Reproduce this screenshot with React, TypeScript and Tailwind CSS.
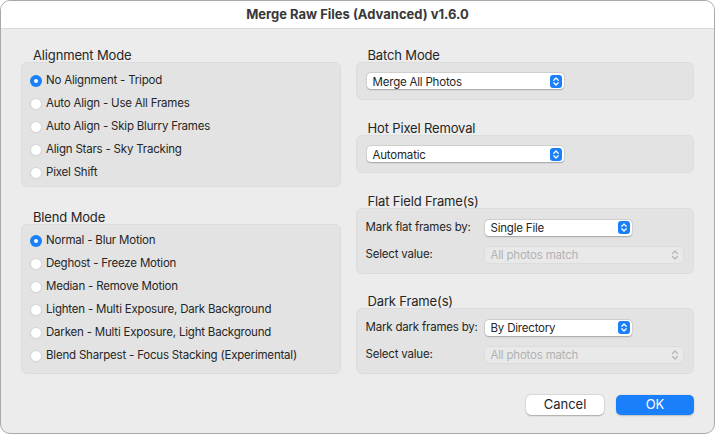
const font = { fontFamily: 'Inter, "Noto Sans", sans-serif' };

function Stepper({ disabled }: { disabled?: boolean }) {
  if (disabled) {
    return (
      <svg width="8" height="12" viewBox="0 0 8 12" className="text-[#b4b4b4]">
        <path d="M1.5 4.5L4 2l2.5 2.5M1.5 7.5L4 10l2.5-2.5" fill="none" stroke="currentColor" strokeWidth="1.2" strokeLinecap="round" strokeLinejoin="round" />
      </svg>
    );
  }
  return (
    <span className="flex h-[13px] w-[12px] items-center justify-center rounded-[3px] bg-[#1a7ffb]">
      <svg width="8" height="11" viewBox="0 0 8 11">
        <path d="M1.8 4.2L4 2l2.2 2.2M1.8 6.8L4 9l2.2-2.2" fill="none" stroke="white" strokeWidth="1.3" strokeLinecap="round" strokeLinejoin="round" />
      </svg>
    </span>
  );
}

function Select({ value, width, disabled }: { value: string; width: string; disabled?: boolean }) {
  return (
    <div
      className={`flex h-[16px] items-center justify-between rounded-[4px] pl-[6px] text-[11.5px] tracking-[-0.2px] ${width} ${
        disabled
          ? 'bg-[#e9e9e9] pr-[4px] text-[#b2b2b2] shadow-[0_0_0_0.5px_rgba(0,0,0,0.06)]'
          : 'bg-white pr-[2px] text-[#262626] shadow-[0_0.5px_1.5px_rgba(0,0,0,0.25),0_0_0_0.5px_rgba(0,0,0,0.08)]'
      }`}
    >
      <span className="pt-[1px] leading-[16px]">{value}</span>
      <Stepper disabled={disabled} />
    </div>
  );
}

function Radio({ label, checked }: { label: string; checked?: boolean }) {
  return (
    <div className="flex h-[23px] items-center gap-[4px]">
      {checked ? (
        <span className="flex h-[12px] w-[12px] items-center justify-center rounded-full bg-[#1a7ffb]">
          <span className="h-[4px] w-[4px] rounded-full bg-white" />
        </span>
      ) : (
        <span className="h-[12px] w-[12px] rounded-full border border-[#d6d6d6] bg-white shadow-[0_0.5px_1px_rgba(0,0,0,0.06)]" />
      )}
      <span className="whitespace-nowrap text-[11.5px] tracking-[-0.2px] text-[#262626]">{label}</span>
    </div>
  );
}

function Section({ title, children, className = '' }: { title: string; children: React.ReactNode; className?: string }) {
  return (
    <div className={className}>
      <div className="h-[15px] whitespace-nowrap pl-[12px] text-[13px] leading-[17px] tracking-[-0.15px] text-[#262626]">{title}</div>
      <div className="rounded-[6px] border border-[#dcdcdc] bg-[#e3e3e3]">{children}</div>
    </div>
  );
}

function FieldRow({ label, children }: { label: string; children: React.ReactNode }) {
  return (
    <div className="flex h-[27px] items-center">
      <span className="w-[119px] whitespace-nowrap text-[11.5px] tracking-[-0.2px] text-[#262626]">{label}</span>
      {children}
    </div>
  );
}

export default function App() {
  return (
    <div style={font} className="flex h-[434px] w-[715px] flex-col overflow-hidden rounded-[10px] border border-[#a9a9a9] bg-[#ececec]">
      <div className="flex h-[28px] shrink-0 items-center justify-center border-b border-[#d9d9d9] bg-white text-[13px] font-bold text-[#383838]">
        Merge Raw Files (Advanced) v1.6.0
      </div>

      <div className="flex flex-1 flex-col px-[20px] pt-[18px]">
        <div className="flex gap-[15px]">
          <div className="w-[320px]">
            <Section title="Alignment Mode">
              <div className="pl-[8px] pt-[6px] pb-[2px]">
                <Radio label="No Alignment - Tripod" checked />
                <Radio label="Auto Align - Use All Frames" />
                <Radio label="Auto Align - Skip Blurry Frames" />
                <Radio label="Align Stars - Sky Tracking" />
                <Radio label="Pixel Shift" />
              </div>
            </Section>
            <Section title="Blend Mode" className="mt-[22px]">
              <div className="pl-[8px] pt-[4px] pb-[6px]">
                <Radio label="Normal - Blur Motion" checked />
                <Radio label="Deghost - Freeze Motion" />
                <Radio label="Median - Remove Motion" />
                <Radio label="Lighten - Multi Exposure, Dark Background" />
                <Radio label="Darken - Multi Exposure, Light Background" />
                <Radio label="Blend Sharpest - Focus Stacking (Experimental)" />
              </div>
            </Section>
          </div>

          <div className="w-[339px]">
            <Section title="Batch Mode">
              <div className="flex h-[36px] items-center pl-[10px]">
                <Select value="Merge All Photos" width="w-[197px]" />
              </div>
            </Section>
            <Section title="Hot Pixel Removal" className="mt-[20px]">
              <div className="flex h-[36px] items-center pl-[10px]">
                <Select value="Automatic" width="w-[197px]" />
              </div>
            </Section>
            <Section title="Flat Field Frame(s)" className="mt-[20px]">
              <div className="px-[9px] pt-[5px] pb-[5px]">
                <FieldRow label="Mark flat frames by:">
                  <Select value="Single File" width="w-[147px]" />
                </FieldRow>
                <FieldRow label="Select value:">
                  <Select value="All photos match" width="w-[198px]" disabled />
                </FieldRow>
              </div>
            </Section>
            <Section title="Dark Frame(s)" className="mt-[19px]">
              <div className="px-[9px] pt-[5px] pb-[5px]">
                <FieldRow label="Mark dark frames by:">
                  <Select value="By Directory" width="w-[147px]" />
                </FieldRow>
                <FieldRow label="Select value:">
                  <Select value="All photos match" width="w-[198px]" disabled />
                </FieldRow>
              </div>
            </Section>
          </div>
        </div>

        <div className="mt-auto mb-[18px] flex justify-end gap-[12px]">
          <button className="h-[20px] w-[78px] rounded-[5px] bg-white text-[13px] text-[#262626] shadow-[0_0.5px_1.5px_rgba(0,0,0,0.25),0_0_0_0.5px_rgba(0,0,0,0.08)]">
            Cancel
          </button>
          <button className="h-[20px] w-[78px] rounded-[5px] bg-[#1a7ffb] text-[13px] text-white shadow-[0_0.5px_1.5px_rgba(0,0,0,0.2)]">
            OK
          </button>
        </div>
      </div>
    </div>
  );
}
